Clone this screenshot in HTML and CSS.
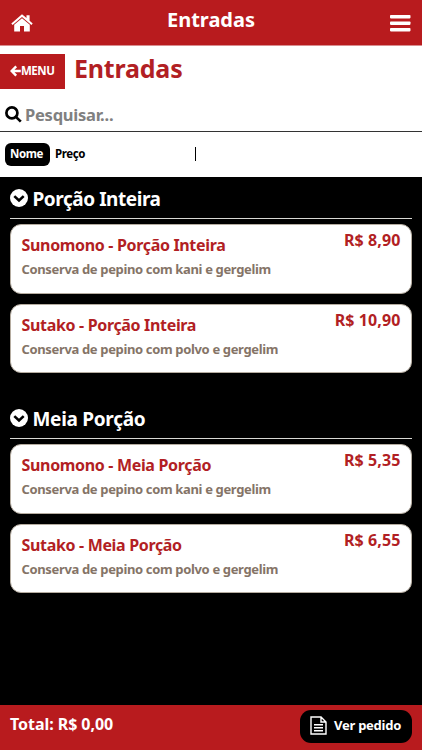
FILE: index.html
```html
<!DOCTYPE html>
<html lang="pt-BR">
<head>
<meta charset="utf-8">
<title>Entradas</title>
<link rel="stylesheet" href="styles.css">
</head>
<body>
<header class="topbar">
  <svg class="home" viewBox="0 0 22 18"><path d="M11 0.3 15.5 4.1V1.2H18.6V6.8L21.7 9.5 20.4 11.1 11 3.1 1.6 11.1 0.3 9.5Z"/><path d="M11 4.2 18.8 10.8V17.6H13V12H9V17.6H3.2V10.8Z"/></svg>
  <h1 class="topbar-title">Entradas</h1>
  <svg class="burger" viewBox="0 0 21 18"><rect y="1" width="20.5" height="3.4" rx=".8"/><rect y="7.5" width="20.5" height="3.4" rx=".8"/><rect y="14" width="20.5" height="3.4" rx=".8"/></svg>
</header>
<section class="heading">
  <a class="menu-btn"><svg class="arrow" viewBox="0 0 11 12"><path d="M6.2 1.3 1.6 6 6.2 10.7M2 6H10.8"/></svg><span>MENU</span></a>
  <h2 class="title">Entradas</h2>
</section>
<div class="search">
  <svg class="lens" viewBox="0 0 17 17"><circle cx="6.9" cy="6.9" r="5.5"/><path d="M10.9 10.9 15.8 15.6"/></svg>
  <span class="placeholder">Pesquisar...</span>
</div>
<nav class="sort">
  <span class="sort-active">Nome</span>
  <span class="sort-other">Preço</span>
  <span class="divider"></span>
</nav>
<main class="list">
  <section class="group">
    <h3 class="group-head"><svg class="chev" viewBox="0 0 18 18"><circle cx="9" cy="9" r="9"/><path d="M4.3 7.1 9 11.5 13.7 7.1"/></svg><span>Porção Inteira</span></h3>
    <article class="card"><div><h4 class="name">Sunomono - Porção Inteira</h4><p class="desc">Conserva de pepino com kani e gergelim</p></div><span class="price">R$ 8,90</span></article>
    <article class="card"><div><h4 class="name">Sutako - Porção Inteira</h4><p class="desc">Conserva de pepino com polvo e gergelim</p></div><span class="price">R$ 10,90</span></article>
  </section>
  <section class="group">
    <h3 class="group-head"><svg class="chev" viewBox="0 0 18 18"><circle cx="9" cy="9" r="9"/><path d="M4.3 7.1 9 11.5 13.7 7.1"/></svg><span class="wide">Meia Porção</span></h3>
    <article class="card"><div><h4 class="name">Sunomono - Meia Porção</h4><p class="desc">Conserva de pepino com kani e gergelim</p></div><span class="price">R$ 5,35</span></article>
    <article class="card"><div><h4 class="name">Sutako - Meia Porção</h4><p class="desc">Conserva de pepino com polvo e gergelim</p></div><span class="price">R$ 6,55</span></article>
  </section>
</main>
<footer class="footer">
  <span class="total">Total: R$ 0,00</span>
  <a class="order"><svg class="doc" viewBox="0 0 17 19"><path d="M1 1H11L16 6V18H1ZM11 1V6H16M4 8.7H13M4 11.7H13M4 14.7H13"/></svg><span>Ver pedido</span></a>
</footer>
</body>
</html>
```
FILE: styles.css
```css
* { box-sizing: border-box; margin: 0; padding: 0; }
body {
  display: flex;
  flex-direction: column;
  height: 750px;
  overflow: hidden;
  background: #000;
  font-family: "Noto Sans", "Open Sans", sans-serif;
  font-weight: 700;
  white-space: nowrap;
}
svg { display: block; flex: none; }

.topbar {
  display: grid;
  grid-template-columns: 60px 1fr 60px;
  height: 46px;
  padding: 0 11px;
  background: #b81b1e;
  border-bottom: 1px solid #d98d8f;
}
.home { width: 22px; height: 18px; margin-top: 14px; fill: #fff; }
.topbar-title { text-align: center; color: #fff; font-size: 20px; line-height: 40px; }
.burger { width: 21px; height: 18px; margin-top: 14px; justify-self: end; fill: #fff; }

.heading { display: flex; height: 49px; background: #fff; }
.menu-btn {
  display: flex;
  align-items: center;
  width: 65px;
  height: 35px;
  margin-top: 8px;
  padding: 0 0 2px 10px;
  background: #b81b1e;
  color: #fff;
  font-size: 11.5px;
  letter-spacing: -.5px;
}
.arrow { width: 11px; height: 12px; fill: none; stroke: #fff; stroke-width: 2.4; }
.title { margin-left: 9px; color: #b21f24; font-size: 25px; line-height: 45px; letter-spacing: -.2px; }

.search {
  display: flex;
  height: 37px;
  padding-left: 5px;
  background: #fff;
  border-bottom: 1px solid #333;
}
.lens { width: 17px; height: 17px; margin-top: 11px; fill: none; stroke: #000; stroke-width: 2.7; }
.placeholder { margin-left: 3px; color: #808080; font-size: 16.5px; line-height: 39px; letter-spacing: -.25px; }

.sort { display: flex; height: 45px; padding: 11px 0 0 5px; background: #fff; font-size: 11.5px; }
.sort-active {
  width: 45px;
  height: 23px;
  padding-left: 5px;
  border-radius: 6px;
  background: #000;
  color: #fff;
  line-height: 21px;
  letter-spacing: -.4px;
}
.sort-other { width: 145px; padding-left: 5px; line-height: 21px; letter-spacing: -.4px; }
.divider { width: 1px; height: 14px; margin-top: 4px; background: #000; }

.list { flex: 1; padding: 0 10px; }
.group { height: 220px; }
.group-head {
  display: flex;
  height: 42px;
  border-bottom: 1px solid #d8d8d4;
  margin-bottom: 5px;
  color: #fff;
  font-size: 19px;
  line-height: 44px;
  letter-spacing: -.45px;
}
.wide { letter-spacing: -.3px; }
.chev { width: 18px; height: 18px; margin: 12px 4.5px 0 0; fill: #fff; }
.chev path { fill: none; stroke: #000; stroke-width: 2.6; }
.card {
  display: flex;
  justify-content: space-between;
  height: 69.5px;
  margin-bottom: 10px;
  padding: 0 10.5px;
  border: 1px solid #b5aca0;
  border-radius: 11px;
  background: #fff;
}
.name { margin-top: 9px; color: #b21f24; font-size: 16px; line-height: 22px; letter-spacing: -.33px; }
.desc { margin-top: 3px; color: #857467; font-size: 13px; line-height: 21px; letter-spacing: -.35px; }
.price { margin-top: 4px; color: #b21f24; font-size: 16px; line-height: 23px; letter-spacing: .1px; }

.footer { display: flex; justify-content: space-between; height: 45px; padding: 0 10px; background: #b81b1e; color: #fff; }
.total { font-size: 16px; line-height: 38px; letter-spacing: -.05px; }
.order {
  display: flex;
  width: 112px;
  height: 33px;
  margin-top: 5px;
  padding-left: 10px;
  border-radius: 11px;
  background: #000;
  font-size: 13px;
  line-height: 31px;
  letter-spacing: -.25px;
}
.doc { width: 17px; height: 19px; margin: 6px 7px 0 0; fill: none; stroke: #fff; stroke-width: 1.4; }
```
